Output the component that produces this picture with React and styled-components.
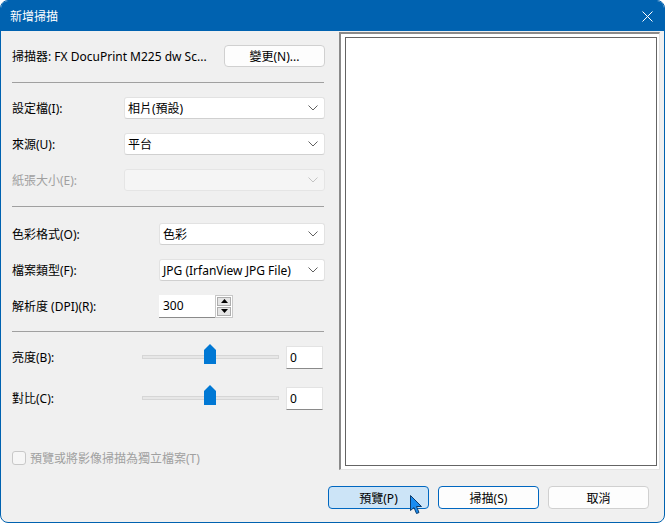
import React from "react";
import styled, { createGlobalStyle } from "styled-components";

const Global = createGlobalStyle`
  html, body { margin: 0; padding: 0; background: #ffffff; }
  body {
    font-family: "Noto Sans", "Noto Sans CJK TC", sans-serif;
    font-size: 12px;
    color: #000;
  }
  * { box-sizing: border-box; }
`;

const Window = styled.div`
  position: relative;
  width: 665px;
  height: 523px;
  border: 1px solid #0062b0;
  border-radius: 8px;
  overflow: hidden;
  background: #f0f0f0;
  display: flex;
  flex-direction: column;
`;

const TitleBar = styled.div`
  height: 30px;
  flex: none;
  background: #0062b0;
  color: #fff;
  display: flex;
  align-items: center;
  justify-content: space-between;
  padding: 0 11px 0 9px;
  font-size: 12px;
`;

const Body = styled.div`
  flex: 1;
  display: flex;
  min-height: 0;
`;

const Panel = styled.div`
  width: 338px;
  flex: none;
  display: flex;
  flex-direction: column;
  padding: 14px 14px 0 11px;
`;

const Row = styled.div`
  display: flex;
  align-items: center;
  height: 22px;
  margin-top: ${(p) => p.$mt || 0}px;
`;

const Label = styled.div`
  width: ${(p) => p.$w || 112}px;
  flex: none;
  color: ${(p) => (p.$disabled ? "#a0a0a0" : "#000")};
  white-space: nowrap;
`;

const ScannerName = styled.div`
  flex: 1;
  white-space: nowrap;
  overflow: hidden;
`;

const Separator = styled.div`
  height: 1px;
  background: #a0a0a0;
  margin-top: ${(p) => p.$mt || 0}px;
  width: 312px;
`;

const Button = styled.button`
  width: 101px;
  height: ${(p) => p.$h || 23}px;
  border-radius: 4px;
  font: inherit;
  font-size: 12px;
  color: #000;
  padding: 0;
  border: 1px solid ${(p) => (p.$variant === "hot" || p.$variant === "default" ? "#0067c0" : "#d0d0d0")};
  background: ${(p) => (p.$variant === "hot" ? "#cce4f7" : "#fdfdfd")};
  display: flex;
  align-items: center;
  justify-content: center;
  flex: none;
`;

const Combo = styled.div`
  flex: 1;
  height: 22px;
  background: ${(p) => (p.$disabled ? "#f5f5f5" : "#fff")};
  border: 1px solid ${(p) => (p.$disabled ? "#e5e5e5" : "#e2e2e2")};
  border-bottom-color: ${(p) => (p.$disabled ? "#e5e5e5" : "#d0d0d0")};
  border-radius: 3px;
  display: flex;
  align-items: center;
  justify-content: space-between;
  padding: 0 6px 0 3px;
  white-space: nowrap;
`;

const Chevron = ({ color }) => (
  <svg width="10" height="6" viewBox="0 0 10 6">
    <path d="M0.5 0.5 L5 5 L9.5 0.5" fill="none" stroke={color} strokeWidth="1" />
  </svg>
);

const SpinWrap = styled.div`
  display: flex;
  height: 23px;
`;

const SpinInput = styled.div`
  width: 56px;
  height: 23px;
  background: #fff;
  border-bottom: 1px solid #8a8a8a;
  display: flex;
  align-items: center;
  padding-left: 4px;
`;

const SpinButtons = styled.div`
  width: 18px;
  height: 23px;
  border: 1px solid #c8c8c8;
  background: #fff;
  display: flex;
  flex-direction: column;
  padding: 1px;
  gap: 1px;
`;

const SpinBtn = styled.div`
  flex: 1;
  background: #e5e5e5;
  border: 1px solid #adadad;
  display: flex;
  align-items: center;
  justify-content: center;
`;

const Arrow = ({ up }) => (
  <svg width="7" height="4" viewBox="0 0 7 4">
    <path d={up ? "M0 4 L3.5 0 L7 4 Z" : "M0 0 L3.5 4 L7 0 Z"} fill="#000" />
  </svg>
);

const SliderBox = styled.div`
  position: relative;
  width: 137px;
  height: 22px;
  flex: none;
  display: flex;
  align-items: center;
`;

const Track = styled.div`
  width: 100%;
  height: 4px;
  background: #e7e7e7;
  border: 1px solid #d6d6d6;
`;

const Thumb = styled.svg`
  position: absolute;
  left: 62px;
  top: ${(p) => p.$top}px;
`;

const ValueBox = styled.div`
  width: 37px;
  height: 23px;
  margin-left: 7px;
  background: #fff;
  border: 1px solid #e3e3e3;
  border-bottom-color: #8a8a8a;
  display: flex;
  align-items: center;
  padding-left: 3px;
`;

const CheckRow = styled.label`
  display: flex;
  align-items: center;
  gap: 4px;
  margin-top: 40px;
  color: #a0a0a0;
`;

const Check = styled.span`
  width: 14px;
  height: 14px;
  border: 1px solid #c8c8c8;
  border-radius: 3px;
  background: #f6f6f6;
  flex: none;
`;

const PreviewFrame = styled.div`
  flex: 1;
  margin: 1px 4px 0 0;
  border-top: 2px solid #8a8a8a;
  border-left: 2px solid #8a8a8a;
  border-right: 1px solid #e3e3e3;
  border-bottom: 1px solid #e3e3e3;
  background: #fff;
  padding: 3px 2px 3px 4px;
  display: flex;
`;

const PreviewInner = styled.div`
  flex: 1;
  border: 1px solid #646464;
  background: #fff;
`;

const Footer = styled.div`
  height: 52px;
  flex: none;
  display: flex;
  justify-content: flex-end;
  align-items: flex-start;
  gap: 9px;
  padding: 16px 15px 0 0;
`;

const Cursor = styled.svg`
  position: absolute;
  left: 409px;
  top: 494px;
`;

export default function App() {
  return (
    <>
      <Global />
      <Window>
        <TitleBar>
          <span>新增掃描</span>
          <svg width="11" height="11" viewBox="0 0 11 11">
            <path d="M0.5 0.5 L10.5 10.5 M10.5 0.5 L0.5 10.5" stroke="#fff" strokeWidth="1" />
          </svg>
        </TitleBar>
        <Body>
          <Panel>
            <Row>
              <ScannerName>掃描器: FX DocuPrint M225 dw Sc...</ScannerName>
              <Button $h={22}>變更(N)...</Button>
            </Row>
            <Separator $mt={15} />
            <Row $mt={14}>
              <Label>設定檔(I):</Label>
              <Combo>
                <span>相片(預設)</span>
                <Chevron color="#606060" />
              </Combo>
            </Row>
            <Row $mt={14}>
              <Label>來源(U):</Label>
              <Combo>
                <span>平台</span>
                <Chevron color="#606060" />
              </Combo>
            </Row>
            <Row $mt={14}>
              <Label $disabled>紙張大小(E):</Label>
              <Combo $disabled>
                <span />
                <Chevron color="#c4c4c4" />
              </Combo>
            </Row>
            <Separator $mt={15} />
            <Row $mt={16}>
              <Label $w={147}>色彩格式(O):</Label>
              <Combo>
                <span>色彩</span>
                <Chevron color="#606060" />
              </Combo>
            </Row>
            <Row $mt={14}>
              <Label $w={147}>檔案類型(F):</Label>
              <Combo>
                <span>JPG (IrfanView JPG File)</span>
                <Chevron color="#606060" />
              </Combo>
            </Row>
            <Row $mt={14}>
              <Label $w={147}>解析度 (DPI)(R):</Label>
              <SpinWrap>
                <SpinInput>300</SpinInput>
                <SpinButtons>
                  <SpinBtn><Arrow up /></SpinBtn>
                  <SpinBtn><Arrow /></SpinBtn>
                </SpinButtons>
              </SpinWrap>
            </Row>
            <Separator $mt={14} />
            <Row $mt={14}>
              <Label $w={130}>亮度(B):</Label>
              <SliderBox>
                <Track />
                <Thumb $top={-2} width="12" height="20" viewBox="0 0 12 20">
                  <path d="M0 6 L6 0 L12 6 L12 20 L0 20 Z" fill="#0078d4" />
                </Thumb>
              </SliderBox>
              <ValueBox>0</ValueBox>
            </Row>
            <Row $mt={19}>
              <Label $w={130}>對比(C):</Label>
              <SliderBox>
                <Track />
                <Thumb $top={-2} width="12" height="20" viewBox="0 0 12 20">
                  <path d="M0 6 L6 0 L12 6 L12 20 L0 20 Z" fill="#0078d4" />
                </Thumb>
              </SliderBox>
              <ValueBox>0</ValueBox>
            </Row>
            <CheckRow>
              <Check />
              <span>預覽或將影像掃描為獨立檔案(T)</span>
            </CheckRow>
          </Panel>
          <PreviewFrame>
            <PreviewInner />
          </PreviewFrame>
        </Body>
        <Footer>
          <Button $variant="hot">預覽(P)</Button>
          <Button $variant="default">掃描(S)</Button>
          <Button>取消</Button>
        </Footer>
        <Cursor width="13" height="20" viewBox="0 0 13 20">
          <path d="M0.5 0.5 L0.5 15.5 L4 12.5 L6.5 18.5 L9 17.5 L6.5 11.5 L11.5 11.5 Z" fill="#1a8cf0" stroke="#0b3c6e" strokeWidth="1" strokeLinejoin="round" />
        </Cursor>
      </Window>
    </>
  );
}
